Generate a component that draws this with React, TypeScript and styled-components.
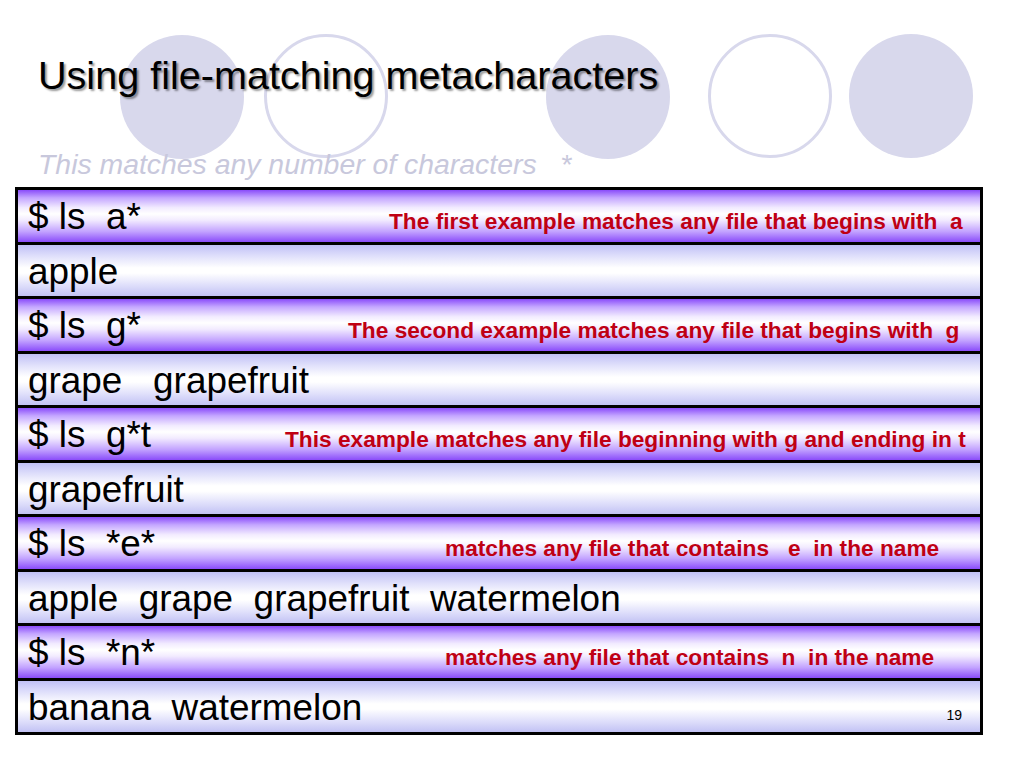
import React from "react";
import styled, { createGlobalStyle } from "styled-components";

const GlobalStyle = createGlobalStyle`
  html, body { margin: 0; padding: 0; background: #ffffff; }
  body { font-family: "Liberation Sans", Arial, Helvetica, sans-serif; }
`;

const Slide = styled.div`
  position: relative;
  width: 1024px;
  height: 768px;
  overflow: hidden;
  background: #ffffff;
  box-sizing: border-box;
  padding: 51px 0 0 15px;
  display: flex;
  flex-direction: column;
`;

const Circle = styled.div<{ $hollow?: boolean }>`
  position: absolute;
  width: 124px;
  height: 124px;
  border-radius: 50%;
  box-sizing: border-box;
  background: ${(p) => (p.$hollow ? "#ffffff" : "#d8d8ec")};
  border: ${(p) => (p.$hollow ? "3px solid #d8d8ec" : "none")};
  z-index: 0;
`;

const Content = styled.div`
  position: relative;
  z-index: 1;
  display: flex;
  flex-direction: column;
`;

const Title = styled.h1`
  margin: 0 0 0 23px;
  font-family: "Liberation Sans", Arial, sans-serif;
  font-weight: normal;
  font-size: 39.6px;
  line-height: 48px;
  color: #000000;
  text-shadow: 2px 2px 2px rgba(0, 0, 0, 0.4);
  white-space: nowrap;
`;

const Subtitle = styled.p`
  margin: 49px 0 0 23px;
  font-family: "Liberation Sans", Arial, sans-serif;
  font-style: italic;
  font-size: 28.4px;
  line-height: 32px;
  color: #c8c8dc;
  white-space: pre;
`;

const Table = styled.div`
  margin-top: 7px;
  width: 968px;
  height: 548px;
  box-sizing: border-box;
  border: 3px solid #000000;
  background: #000000;
  display: grid;
  grid-template-rows: repeat(10, 1fr);
  row-gap: 3px;
`;

const cmdGradient =
  "linear-gradient(to bottom, #8a4cfa 0%, #c4a6ff 15%, #f2ebff 34%, #ffffff 46%, #f2ebff 58%, #c2a2ff 80%, #8a4cfa 100%)";
const outGradient =
  "linear-gradient(to bottom, #c0c0f6 0%, #e0e0fb 22%, #ffffff 45%, #ffffff 55%, #e0e0fb 78%, #c2c2f4 100%)";

const Row = styled.div<{ $cmd?: boolean }>`
  display: flex;
  align-items: baseline;
  box-sizing: border-box;
  padding: 3px 0 0 10px;
  background: ${(p) => (p.$cmd ? cmdGradient : outGradient)};
  font-size: 36.9px;
  line-height: 48px;
  color: #000000;
  white-space: pre;
  overflow: hidden;
`;

const Cmd = styled.span<{ $w: number }>`
  flex: none;
  width: ${(p) => p.$w}px;
`;

const Note = styled.span`
  flex: none;
  font-size: 22.7px;
  font-weight: bold;
  color: #bf0014;
`;

const Output = styled.span`
  flex: 1;
`;

const PageNum = styled.span`
  flex: none;
  margin-right: 18px;
  font-size: 14px;
  color: #000000;
`;

type Item = { cmd: string; note: string; w: number; out: string };

const items: Item[] = [
  { cmd: "$ ls  a*", note: "The first example matches any file that begins with  a", w: 361, out: "apple" },
  { cmd: "$ ls  g*", note: "The second example matches any file that begins with  g", w: 320, out: "grape   grapefruit" },
  { cmd: "$ ls  g*t", note: "This example matches any file beginning with g and ending in t", w: 257, out: "grapefruit" },
  { cmd: "$ ls  *e*", note: "matches any file that contains   e  in the name", w: 417, out: "apple  grape  grapefruit  watermelon" },
  { cmd: "$ ls  *n*", note: "matches any file that contains  n  in the name", w: 417, out: "banana  watermelon" },
];

const circles = [
  { x: 120, y: 35, hollow: false },
  { x: 264, y: 34, hollow: true },
  { x: 546, y: 35, hollow: false },
  { x: 708, y: 34, hollow: true },
  { x: 849, y: 34, hollow: false },
];

export default function App() {
  return (
    <>
      <GlobalStyle />
      <Slide>
        {circles.map((c, i) => (
          <Circle key={i} $hollow={c.hollow} style={{ left: c.x, top: c.y }} />
        ))}
        <Content>
          <Title>Using file-matching metacharacters</Title>
          <Subtitle>{"This matches any number of characters   *"}</Subtitle>
          <Table>
            {items.map((it, i) => (
              <React.Fragment key={i}>
                <Row $cmd>
                  <Cmd $w={it.w}>{it.cmd}</Cmd>
                  <Note>{it.note}</Note>
                </Row>
                <Row>
                  <Output>{it.out}</Output>
                  {i === items.length - 1 && <PageNum>19</PageNum>}
                </Row>
              </React.Fragment>
            ))}
          </Table>
        </Content>
      </Slide>
    </>
  );
}
